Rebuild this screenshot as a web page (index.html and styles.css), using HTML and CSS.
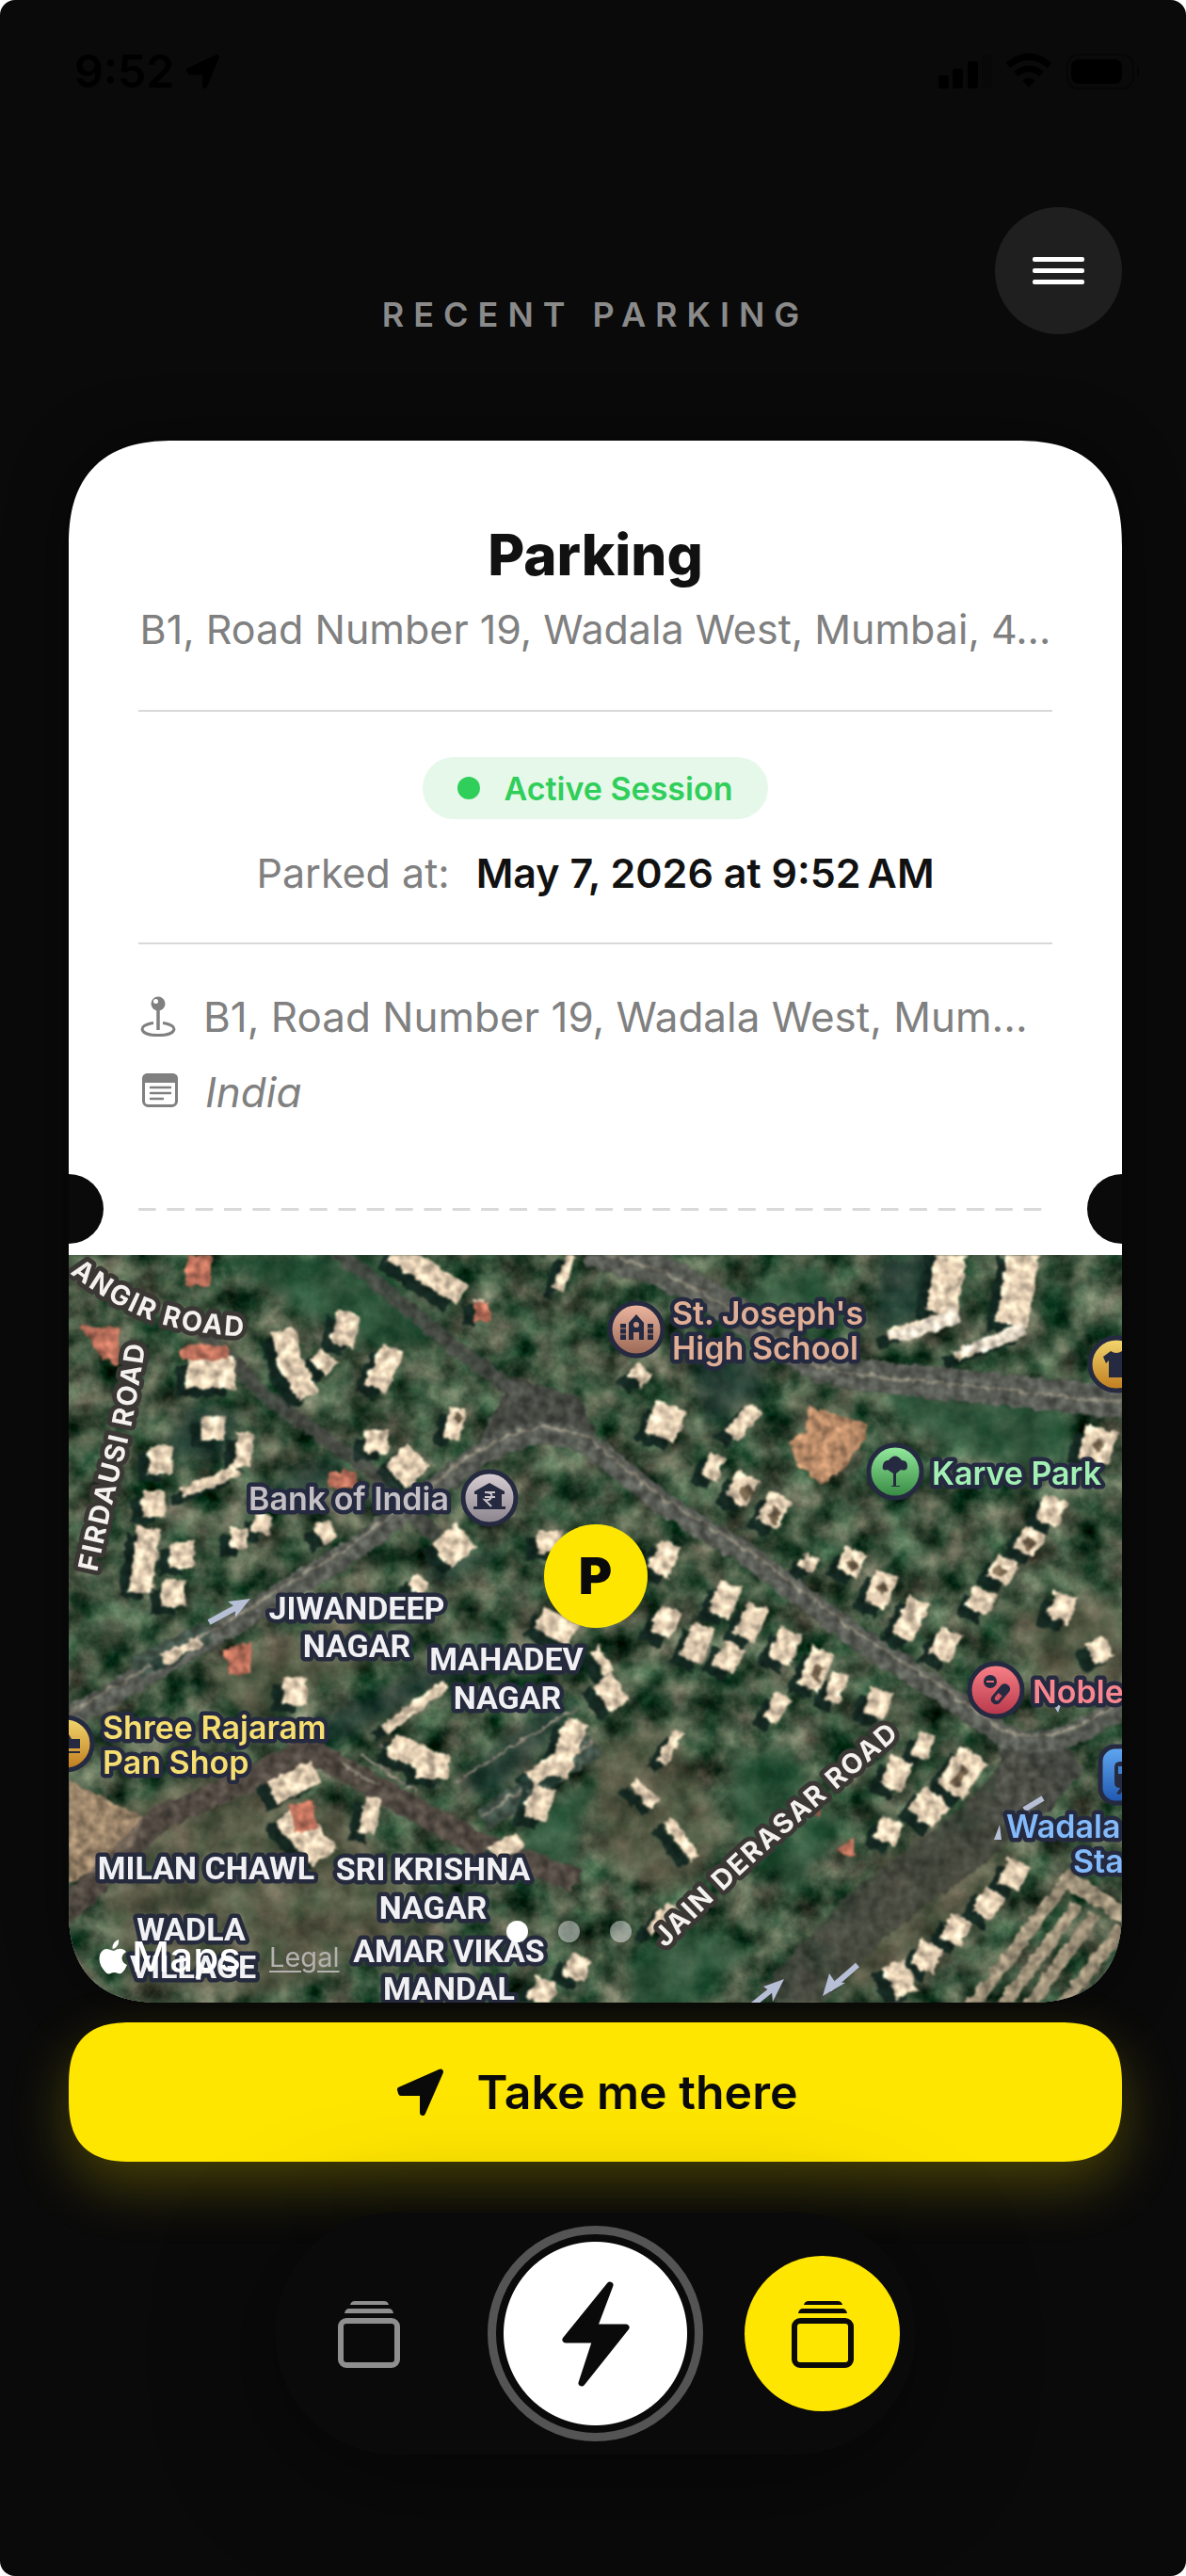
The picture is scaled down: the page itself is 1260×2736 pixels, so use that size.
FILE: index.html
```html
<!DOCTYPE html>
<html lang="en">
<head>
<meta charset="utf-8">
<meta name="viewport" content="width=device-width, initial-scale=1">
<title>Recent Parking</title>
<link rel="stylesheet" href="styles.css">
</head>
<body>
<div class="screen">
  <div class="status">
    <span class="status-time">9:52</span>
    <svg class="status-arrow" viewBox="0 0 38 38" width="38" height="38" aria-hidden="true"><path d="M3.500 17.500 33.500 3.500 20.500 34.500V20H5Z" fill="#000" stroke="#000" stroke-width="5" stroke-linejoin="round"/></svg>
    <svg class="status-icons" viewBox="0 0 216 40" width="216" height="40" aria-hidden="true">
      <rect x="0" y="24" width="11" height="14" rx="3"/><rect x="15" y="17" width="11" height="21" rx="3"/><rect x="31" y="9" width="11" height="29" rx="3"/><rect x="46" y="2" width="11" height="36" rx="3" fill="#080808"/>
      <g fill="none" stroke="#000" stroke-width="7"><path d="M74 13.500Q96 -5 118 13.500"/><path d="M82.500 22.500Q96 11.500 109.500 22.500"/></g>
      <path d="M89.500 29.500Q96 24 102.500 29.500L96 37Z"/>
      <rect x="137" y="2" width="70" height="36" rx="12" fill="none" stroke="#060606" stroke-width="2"/>
      <rect x="141" y="7" width="54" height="26" rx="8"/><path d="M211 14q5 6 0 12z" fill="#050505"/>
    </svg>
  </div>

  <header class="header">
    <h1 class="header-title">RECENT PARKING</h1>
    <button class="menu" type="button" aria-label="Menu"><span></span><span></span><span></span></button>
  </header>

  <main>
    <article class="card">
      <section class="details">
        <h2 class="place">Parking</h2>
        <p class="address">B1, Road Number 19, Wadala West, Mumbai, 4...</p>
        <hr class="rule">
        <p class="badge"><i class="badge-dot"></i>Active Session</p>
        <p class="parked"><span>Parked at:</span><time datetime="2026-05-07T09:52">May 7, 2026 at 9:52&#8239;AM</time></p>
        <hr class="rule">
        <ul class="facts">
          <li>
            <svg viewBox="0 0 40 48" width="40" height="48" aria-hidden="true"><circle cx="21" cy="10" r="7.500" fill="#808080"/><circle cx="18.500" cy="7.500" r="2.500" fill="#fff"/><path d="M21 16V38" stroke="#808080" stroke-width="3.500"/><path d="M16 30.500C-2 33 1 43.500 21 43.500S44 33 26 30.500" fill="none" stroke="#808080" stroke-width="3"/></svg>
            <span>B1, Road Number 19, Wadala West, Mum...</span>
          </li>
          <li>
            <svg viewBox="0 0 42 48" width="42" height="48" aria-hidden="true"><rect x="5.500" y="5.500" width="35" height="33" rx="5" fill="none" stroke="#808080" stroke-width="3"/><path d="M4 14V10q0-6 6-6h26q6 0 6 6v4z" fill="#808080"/><path d="M13 19H34M13 25H34M13 31H26" stroke="#808080" stroke-width="2.500" stroke-linecap="round"/></svg>
            <em>India</em>
          </li>
        </ul>
      </section>
      <div class="tear"><i></i><i></i></div>

      <section class="map" aria-label="Map">
        <svg class="map-art" viewBox="0 0 1119 794" preserveAspectRatio="xMidYMid slice">
          <defs>
            <filter id="ground" x="0" y="0" width="100%" height="100%" color-interpolation-filters="sRGB">
              <feTurbulence type="fractalNoise" baseFrequency=".03" numOctaves="5" seed="8"/>
              <feColorMatrix values=".75 .3 0 0 -.28  .7 .05 0 0 -.05  .62 .12 0 0 -.13  0 0 0 0 1"/>
            </filter>
            <filter id="rough" x="0" y="0" width="100%" height="100%" filterUnits="userSpaceOnUse" color-interpolation-filters="sRGB">
              <feTurbulence type="fractalNoise" baseFrequency=".1" numOctaves="3" seed="3" result="n"/>
              <feDisplacementMap in="SourceGraphic" in2="n" scale="9" xChannelSelector="R" yChannelSelector="G" result="d"/>
              <feColorMatrix in="n" values="1.600 0 0 0 -.3  1.600 0 0 0 -.3  1.600 0 0 0 -.3  0 0 0 0 1" result="g"/>
              <feComposite in="d" in2="g" operator="arithmetic" k1=".6" k2=".65"/>
              <feGaussianBlur stdDeviation="1"/>
            </filter>
            <filter id="soft" x="0" y="0" width="100%" height="100%" filterUnits="userSpaceOnUse"><feGaussianBlur stdDeviation="7"/></filter>
            <linearGradient id="grey" x2="0" y2="1"><stop stop-color="#d9d1d4"/><stop offset="1" stop-color="#89818b"/></linearGradient>
            <linearGradient id="clay" x2="0" y2="1"><stop stop-color="#efb8a2"/><stop offset="1" stop-color="#986653"/></linearGradient>
            <linearGradient id="gold" x2="0" y2="1"><stop stop-color="#f4d970"/><stop offset="1" stop-color="#bf7a1d"/></linearGradient>
            <linearGradient id="green" x2="0" y2="1"><stop stop-color="#96eda0"/><stop offset="1" stop-color="#35873f"/></linearGradient>
            <linearGradient id="red" x2="0" y2="1"><stop stop-color="#fb8389"/><stop offset="1" stop-color="#b53549"/></linearGradient>
            <linearGradient id="blue" x2="0" y2="1"><stop stop-color="#62a9f3"/><stop offset="1" stop-color="#1e56ae"/></linearGradient>
            <path id="angir" d="M1 19Q50 57 95 72T230 88"/>
            <path id="firdausi" d="M30 337Q43 275 58 217T84 76"/>
            <path id="jain" d="M634 736Q690 678 765 612T900 496"/>
            <g id="blocks" fill="none">
              <path stroke-width="12" d="M534 0L519 38M180 228L120 253M941 62L870 86M1014 80L941 107M335 505L402 455M436 46v20M650 505l-20 34M636 600l30 40M600 560l24 24M560 420l14 24M640 690l-24 30M100 430l40-20"/>
              <path stroke-width="18" d="M731 162L703 192M690 212l-10 26M187 188L184 226M414 162l-8 34M262 105l18 16M208 275l-6 20M181 290v22M268 284l10 20M534 530L490 556M324 575l-8 40M365 345l14 10M760 467l-16 28M912 508l-8 26M820 445l-10 30M600 120l14 14M790 320l-8 14M480 620l-30 16"/>
              <path stroke-width="25" d="M345 -4L418 42M298 60l-8 36M227 80L236 116L256 150M345 98L325 142M327 186v24M153 172v24M98 202v30M90 250v28M85 290L76 358M120 304v28M111 346v28M216 572L263 548M342 520l60 24M540 495l-22 60M505 565l-10 34M722 234l-14 28M757 256l-16 30M640 306l-14 32M704 350l-14 32M640 376l-12 28M733 372l-16 34M838 314l-12 24M870 338l-14 34M905 366l-20 40M1027 292l-12 24M1050 258l-12 26M998 322l-12 24M974 356l-10 22M1060 360l-10 28M676 394l-16 36M708 414l-14 26M768 400l-14 32M802 420l-16 40M864 462l-10 28M886 536l-14 30M938 400l-14 28M1010 645l-12 26M984 676l-14 26M948 704l-12 26M918 732l-12 26M876 752l14 34M876 600l-10 24M510 292v24M545 745l-10 24M508 770l-10 24M500 385l36 20M566 450l20 30M240 448v30M1085 425l20-10"/>
              <path stroke-width="34" d="M938 -4L927 62M1015 -4L1002 74M423 298L396 320M372 212L348 236M640 160l-12 34M1098 184l-10 34M962 530l-26 40M924 575l-20 24M232 592L272 640M125 125h52M386 530v26"/>
            </g>
          </defs>
          <rect width="1119" height="794" fill="#3d4d42"/>
          <rect width="1119" height="794" filter="url(#ground)"/>
          <g filter="url(#soft)" opacity=".6">
            <path fill="#19332e" d="M865 0h70l-10 60-70 25zM660 110l70-15 10 50-60 40zM250 500l200-95 10 20-210 110zM410 560l110-90 20 10-90 100zM240 230l60-20-40 50-60 0zM130 160l50 10-20 50-60-10zM380 330l90-20-80 40z"/>
            <path fill="#28593a" d="M160 0h160l90 90-80 10-100-50zM660 60l140-50 30 60-100 40zM700 540l60-20 60 90-50 70-60-60zM500 590l60-30-30 90-70 20zM850 120l100 30 100-10 20 70-60 20-110-40zM600 740l60-30 60 30-60 60h-60z"/>
            <path fill="#6f6653" d="M20 600l160-60 120 60 100 120-200 70-140-20zM150 440l140-60 60 40-160 80zM560 520l80-20 60 120-60 60-80-40zM860 640l120-40 40 60-120 120h-100zM1000 380l119-20v90l-80 40z" opacity=".8"/>
          </g>
          <g filter="url(#rough)">
            <path fill="#a38b6f" d="M-9 553l88 44-10 30-78 48z"/>
            <path fill="#c4936e" d="M786 160l63 20-7 24-26 30-19 10-22-24-11-20 19-13z"/>
            <path fill="#5c5f58" d="M470 130l70 20 20 40-90 10-40 10zM990 520l60-6 30 30-50 60-50 0z" opacity=".8"/>
            <g fill="none" stroke="#5f625b">
              <path stroke-width="34" d="M550 -6L631 17L686 47L797 118Q850 130 890 132L1130 158"/>
              <path stroke-width="16" opacity=".7" d="M283 -6L400 90L480 150M140 80L210 150L330 235L390 300"/>
              <path stroke-width="24" d="M-13 500L165 397L301 314L412 230Q497 165 557 204L631 264L723 320L838 407L927 464L993 510Q1050 535 1130 470"/>
              <path stroke-width="26" stroke="#6c6257" opacity=".8" d="M-20 715L98 597L194 557L253 524L431 624L540 665"/>
              <path stroke-width="60" stroke="#56594f" opacity=".6" d="M1027 544L970 610L853 697L755 800"/>
              <path stroke-width="24" stroke="#48594f" d="M440 600L560 520M70 440l80-40"/>
            </g>
            <g fill="none" stroke="#8d897a" stroke-width="3">
              <path d="M-13 494L165 391L301 308L412 224Q497 160 557 198L631 258L723 314L838 401L927 458L993 504Q1050 529 1130 464M550 -6L631 17L686 47L797 118Q850 130 890 132L1130 158M440 596L558 516M410 560L540 480M330 520l60 40M310 530l60 40M290 540l40 24"/>
            </g>
            <g stroke="#a99b82" fill="none">
              <path stroke-width="14" d="M1056 670L950 810M1072 690L990 800M1090 700L1005 820M1119 715L1045 810"/>
              <path stroke-width="18" d="M1056 660L1130 706"/>
            </g>
            <g stroke="#173029" transform="translate(-11 8)" opacity=".75"><use href="#blocks"/></g>
            <g stroke="#f2dcbf"><use href="#blocks"/></g>
            <g fill="#c47660"><path d="M120 95h50v16h-50zM12 75l44 2-4 40-20-10zM125 0h26v34h-26zM430 50h18v20h-18zM275 230h30v18h-30zM235 585l24-6 6 30-24 6zM780 590l18-14v22zM815 632l20-14v22zM165 420l30-10v34l-24 4z"/></g>
            <path fill="#f7ead7" d="M941 56L868 84l20 8 60-22zM1014 72l-76 30 34 2 44-20z"/>
            <path fill="#77654e" d="M720 242l8 10-8 10-8-10zM750 266l8 10-8 10-8-10zM833 320l6 8-6 8-6-8zM864 346l6 8-6 8-6-8zM990 328l8 8-8 8-8-8zM1020 298l8 8-8 8-8-8zM948 542l8 8-14 16-6-6zM796 432l6 8-8 12-6-8zM414 166l6 6-6 6-6-6zM1094 194l8 8-8 8-8-8z"/>
          </g>
          <g fill="none" stroke="#b7bfd6" stroke-width="6">
            <path d="M149 390L184 371M727 796L752 776M838 754L808 780M1015 589l20-12"/>
            <g fill="#b7bfd6" stroke="none"><path d="M193 365l-24 3 8 6 0 11zM760 769l-22 8 9 6 1 10zM801 787l7-24 6 9 11 1zM983 621l6-16 2 16zM1046 478l5 8 3-8z"/></g>
          </g>

          <g class="road">
            <text><textPath href="#angir">ANGIR ROAD</textPath></text>
            <text><textPath href="#firdausi">FIRDAUSI ROAD</textPath></text>
            <text><textPath href="#jain">JAIN DERASAR ROAD</textPath></text>
          </g>
          <g class="area">
            <text x="306" y="387">JIWANDEEP</text><text x="306" y="427">NAGAR</text>
            <text x="465" y="441">MAHADEV</text><text x="466" y="482">NAGAR</text>
            <text x="146" y="663">MILAN CHAWL</text>
            <text x="387" y="664">SRI KRISHNA</text><text x="387" y="705">NAGAR</text>
            <text x="130" y="728">WADLA</text><text x="132" y="768">VILLAGE</text>
            <text x="404" y="751">AMAR VIKAS</text><text x="404" y="791">MANDAL</text>
          </g>
          <g class="poi">
            <text x="191" y="271" fill="#c3bfc3">Bank of India</text>
            <text x="641" y="74" fill="#dfae95">St. Joseph's</text><text x="641" y="111" fill="#dfae95">High School</text>
            <text x="917" y="244" fill="#a2efb4">Karve Park</text>
            <text x="36" y="514" fill="#f6de70">Shree Rajaram</text><text x="36" y="551" fill="#f6de70">Pan Shop</text>
            <text x="1024" y="476" fill="#f8868f">Noble</text>
            <text x="996" y="619" fill="#83bafa">Wadala</text><text x="1067" y="656" fill="#83bafa">Sta</text>
          </g>
          <g stroke="#262a40" stroke-width="5">
            <circle cx="447" cy="258" r="28" fill="url(#grey)"/>
            <circle cx="603" cy="79" r="28" fill="url(#clay)"/>
            <circle cx="1113" cy="116" r="28" fill="url(#gold)"/>
            <circle cx="878" cy="230" r="28" fill="url(#green)"/>
            <circle cx="-3" cy="519" r="28" fill="url(#gold)"/>
            <circle cx="985" cy="462" r="28" fill="url(#red)"/>
            <rect x="1096" y="522" width="60" height="60" rx="16" fill="url(#blue)"/>
          </g>
          <g fill="#262a40">
            <path d="M431 251l16-9 16 9v3h-3v13h4v3h-34v-3h4v-13h-3z"/>
            <path d="M442 252h11M442 257h11M442 252q9 0 7 5q-1 4-7 3l7 7" fill="none" stroke="#cac3c7" stroke-width="2"/>
            <path d="M586 73h6v17h-6zM615 73h6v17h-6zM595 72l8-9 8 9v18h-5v-8h-6v8h-5z"/><circle cx="603" cy="74" r="3" fill="#c99581"/>
            <path d="M586 78h6M586 84h6M615 78h6M615 84h6" stroke="#c08b77" stroke-width="1"/>
            <path d="M1099 108l8-6q6 4 12 0v28h-14v-18l-3 3z"/>
            <path d="M876 245V232l-6-4q-7 2-5-5 1-5 6-5 7-9 14 0 6 0 6 6 0 6-7 4l-5 4v13h4v1h-9v-1z"/>
            <path d="M-12 514h6q3-12 9 0h9v10h-24zM-12 527h24v2h-24z"/>
            <circle cx="979" cy="453" r="7"/><path d="M975 453h8" stroke="#e46b77" stroke-width="2"/>
            <g transform="rotate(-50 990 467)"><rect x="978" y="461" width="25" height="11" rx="5"/><path d="M984 464h6v5h-6q-4-2 0-5z" fill="#d05263"/></g>
            <path d="M1111 544q0-6 6-6h10v28h-10q-6 0-6-6zM1113 572l5-7h4l-5 8z"/><path d="M1115 543h6v8h-6z" fill="#3f82d2"/>
          </g>
        </svg>
        <span class="pin">P</span>
        <div class="credit">
          <svg viewBox="0 0 31 37" width="31" height="37" aria-hidden="true"><path fill="#fff" d="M21 0q1 5-2.500 8Q16 10.500 14.500 9.500 14 3 21 0ZM16 12q5-3 8.500-2 3 .7 4.500 3-7 5-3 11 1.500 2 4 3-2 5-5 8-2 2-4.500 1-4-2-8 0-3 1.500-5.500-1.500Q-2 25 1.500 15 5 8.500 11 10.500q3 1.200 5 1.500Z"/></svg>
          <span class="credit-name">Maps</span>
          <a class="credit-legal" href="#legal">Legal</a>
        </div>
        <div class="dots"><i class="on"></i><i></i><i></i></div>
      </section>
    </article>

    <button class="go" type="button">
      <svg viewBox="0 0 52 52" width="52" height="52" aria-hidden="true"><path d="M4 23.500 47 4.500 28 48V27H5Z" fill="#0a0a0a" stroke="#0a0a0a" stroke-width="6" stroke-linejoin="round"/></svg>
      Take me there
    </button>
  </main>

  <nav class="dock">
    <button class="tab" type="button" aria-label="Saved spots">
      <svg viewBox="0 0 66 72" width="66" height="72" aria-hidden="true"><path fill="currentColor" d="M13 5q1-4 5-4h31q4 0 5 4zM7 14q1-5 5-5h42q4 0 5 5z"/><rect x="3" y="22" width="60" height="47" rx="6" fill="none" stroke="currentColor" stroke-width="6"/></svg>
    </button>
    <button class="quick" type="button" aria-label="Park now">
      <svg viewBox="0 0 72 112" width="72" height="112" aria-hidden="true"><path d="M51 4 4 62H36L21 108 68 49H34Z" fill="#0a0a0a" stroke="#0a0a0a" stroke-width="7" stroke-linejoin="round"/></svg>
    </button>
    <button class="tab tab-on" type="button" aria-label="Recent parking">
      <svg viewBox="0 0 66 72" width="66" height="72" aria-hidden="true"><path fill="currentColor" d="M13 5q1-4 5-4h31q4 0 5 4zM7 14q1-5 5-5h42q4 0 5 5z"/><rect x="3" y="22" width="60" height="47" rx="6" fill="none" stroke="currentColor" stroke-width="6"/></svg>
    </button>
  </nav>
</div>
</body>
</html>
```
FILE: styles.css
```css
* { box-sizing: border-box; }
body { margin: 0; background: #fff; font-family: Inter, "Liberation Sans", sans-serif; }
h1, h2, p, ul, hr { margin: 0; padding: 0; border: 0; }
button { border: 0; padding: 0; font: inherit; cursor: pointer; }
svg { display: block; flex: none; }

.screen {
  min-height: 100vh;
  padding: 46px 68px 128px 73px;
  border-radius: 16px;
  background: #0a0a0a;
  overflow: hidden;
}

.status { display: flex; align-items: center; height: 60px; margin-right: -21px; padding-left: 6px; color: #000; }
.status-time { font-size: 48px; font-weight: 600; line-height: 60px; }
.status-arrow { margin-left: 12px; }
.status-icons { margin-left: auto; }

.header { display: grid; grid-template-columns: 1fr auto 1fr; align-items: start; margin-top: 114px; }
.header-title { grid-column: 2; margin-top: 92px; color: #8a8a8a; font-size: 36px; font-weight: 600; line-height: 44px; letter-spacing: 10px; }
.menu { display: flex; flex-direction: column; align-items: center; justify-content: center; gap: 7px; justify-self: end; width: 135px; height: 135px; border-radius: 50%; background: #1f1f1f; }
.menu span { width: 55px; height: 5px; border-radius: 2px; background: #fff; }

.card { margin-top: 112px; border-radius: 90px; background: #fff; overflow: hidden; box-shadow: 0 0 60px rgba(0, 0, 0, .5); }
.details { display: flex; flex-direction: column; align-items: center; padding: 86px 74px 61px; color: #808080; }
.place { color: #111; font-size: 60px; font-weight: 800; line-height: 70px; }
.address { margin-top: 19px; font-size: 43px; line-height: 50px; white-space: nowrap; }
.rule { align-self: stretch; height: 2px; background: #d9d9d9; margin-top: 61px; }
.badge { display: flex; align-items: center; gap: 26px; height: 66px; margin-top: 48px; padding: 0 38px 0 37px; border-radius: 33px; background: #e6f8ea; color: #30ce5a; font-size: 34px; font-weight: 600; }
.badge-dot { width: 24px; height: 24px; border-radius: 50%; background: #30ce5a; }
.parked { display: flex; gap: 28px; margin-top: 32px; font-size: 43px; line-height: 50px; white-space: nowrap; }
.parked time { color: #111; font-weight: 600; }
.parked + .rule { margin-top: 49px; }
.facts { display: flex; flex-direction: column; align-self: stretch; gap: 28px; margin-top: 51px; list-style: none; font-size: 44px; line-height: 52px; white-space: nowrap; }
.facts li { display: flex; align-items: center; gap: 29px; }

.tear { display: flex; align-items: center; height: 74px; margin-bottom: 12px; }
.tear i { width: 37px; height: 74px; background: #0a0a0a; }
.tear i:first-child { border-radius: 0 37px 37px 0; }
.tear i:last-child { order: 2; border-radius: 37px 0 0 37px; }
.tear::before { content: ""; order: 1; flex: 1; height: 3px; margin: 0 37px; background: linear-gradient(90deg, #d9d9d9 60%, transparent 60%) 0 0 / 30px 3px round; }

.map { position: relative; aspect-ratio: 1119 / 794; }
.map-art { width: 100%; height: 100%; }
.road text { fill: #f4f2ef; font-size: 29px; font-weight: 700; letter-spacing: 2px; stroke: #3a3735; stroke-width: 10px; paint-order: stroke; stroke-linejoin: round; }
.area text { fill: #f1f1f3; font-family: Roboto, "Liberation Sans", sans-serif; font-size: 34px; font-weight: 700; text-anchor: middle; stroke: #252a3d; stroke-width: 9px; paint-order: stroke; stroke-linejoin: round; }
.poi text { font-size: 34px; font-weight: 600; stroke: #252a40; stroke-width: 9px; paint-order: stroke; stroke-linejoin: round; }
.pin { position: absolute; left: 50%; top: 43%; display: grid; place-items: center; width: 110px; height: 110px; margin: -55px; border-radius: 50%; background: #ffe600; color: #0a0a0a; font-size: 54px; font-weight: 900; line-height: 1; }
.credit { position: absolute; left: 32px; bottom: 24px; display: flex; align-items: center; height: 50px; color: #fff; }
.credit-name { margin-left: 4px; font-size: 44px; font-weight: 500; }
.credit-legal { margin-left: 30px; color: #b3b1af; font-size: 29px; text-underline-offset: 4px; text-decoration-thickness: 2px; }
.dots { position: absolute; left: 0; right: 0; bottom: 64px; display: flex; justify-content: center; gap: 32px; padding-right: 57px; }
.dots i { width: 23px; height: 23px; border-radius: 50%; background: rgba(255, 255, 255, .45); }
.dots .on { background: #fff; }

.go { display: flex; align-items: center; justify-content: center; gap: 34px; width: 100%; height: 148px; margin-top: 21px; padding-left: 3px; border-radius: 54px; background: #ffe600; color: #0a0a0a; font-size: 50px; font-weight: 600; box-shadow: 0 24px 60px rgba(255, 230, 0, .25); }

.dock { position: relative; display: flex; align-items: center; justify-content: center; gap: 44px; width: fit-content; margin: 54px auto 0; padding: 14px 17px; border-radius: 128px; background: #0a0a0a; box-shadow: 0 20px 120px rgba(0, 0, 0, .5); }
.tab { display: grid; place-items: center; width: 165px; height: 165px; border-radius: 50%; background: none; color: #8f8f8f; }
.tab-on { background: #ffe600; color: #0a0a0a; }
.quick { display: grid; place-items: center; width: 229px; height: 229px; border: 9px solid #545454; border-radius: 50%; background: radial-gradient(circle, #fff 97px, #0a0a0a 98px); }

/* Smoother, more continuous corners where the browser can draw them. */
@supports (corner-shape: squircle) {
  .card { border-radius: 112px 112px 100px 100px; corner-shape: superellipse(1.3); }
  .go { border-radius: 68px; corner-shape: superellipse(1.4); }
}
```
